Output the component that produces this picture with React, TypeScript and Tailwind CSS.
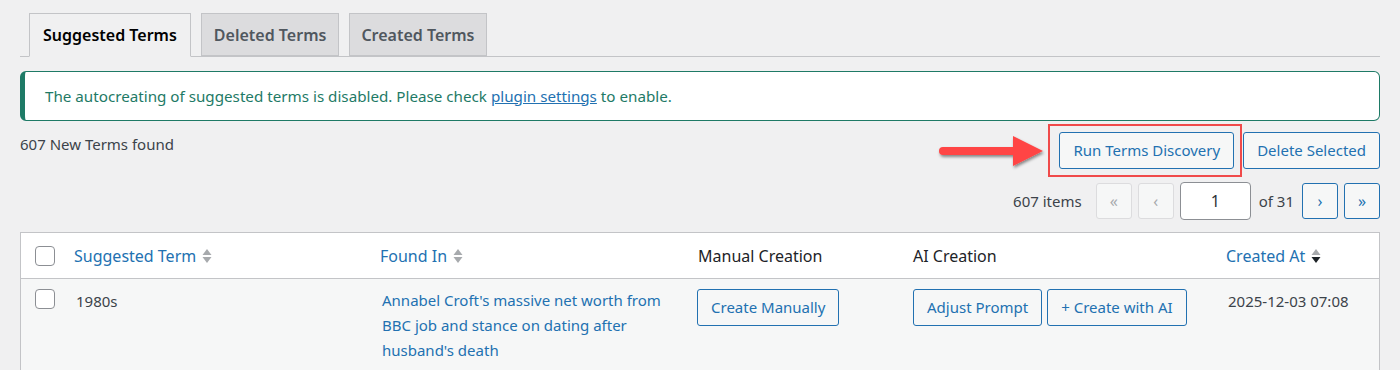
import React from "react";

const SortIcon = ({ active }: { active?: boolean }) => (
  <svg width="10" height="16" viewBox="0 0 10 16" className="ml-[6px] shrink-0">
    <path d="M5 1 L9.5 7 L0.5 7 Z" fill="#a7aaad" />
    <path d="M0.5 9 L9.5 9 L5 15 Z" fill={active ? "#1d2327" : "#a7aaad"} />
  </svg>
);

const Checkbox = () => (
  <span className="block w-5 h-5 rounded-[4px] border border-[#8c8f94] bg-white" />
);

const OutlineButton = ({ children, className = "" }: { children: React.ReactNode; className?: string }) => (
  <button
    className={
      "h-[37px] px-[13px] rounded-[3px] border border-[#2271b1] bg-[#f6f7f7] text-[#2271b1] text-[15px] whitespace-nowrap " +
      className
    }
  >
    {children}
  </button>
);

const PageButton = ({ label, disabled }: { label: string; disabled?: boolean }) => (
  <span
    className={
      disabled
        ? "flex items-center justify-center w-[36px] h-[36px] rounded-[3px] border border-[#dcdcde] bg-[#f6f7f7] text-[#a7aaad] text-[16px]"
        : "flex items-center justify-center w-[36px] h-[36px] rounded-[3px] border border-[#2271b1] bg-[#f6f7f7] text-[#2271b1] text-[16px]"
    }
  >
    {label}
  </span>
);

const Arrow = () => (
  <svg width="112" height="40" viewBox="0 0 112 40" className="absolute left-[-122px] top-[0px]">
    <defs>
      <filter id="sh" x="-20%" y="-40%" width="140%" height="180%">
        <feDropShadow dx="1" dy="2" stdDeviation="1.5" floodColor="#000" floodOpacity="0.45" />
      </filter>
    </defs>
    <g filter="url(#sh)">
      <line x1="6" y1="19" x2="80" y2="19" stroke="#ff4444" strokeWidth="8" strokeLinecap="round" />
      <path d="M76 4 L106 19 L76 34 Z" fill="#ff4444" />
    </g>
  </svg>
);

export default function App() {
  return (
    <div
      className="min-h-[370px] bg-[#f0f0f1] px-5 pt-[13px] text-[#3c434a] overflow-hidden"
      style={{ fontFamily: '"Noto Sans", "Open Sans", sans-serif' }}
    >
      {/* tabs */}
      <div className="flex items-end border-b border-[#c3c4c7] pl-[9px] gap-[10px]">
        <span className="h-[44px] -mb-px px-[13px] flex items-center border border-[#c3c4c7] border-b-[#f0f0f1] bg-[#f0f0f1] text-[#000] text-[16px] font-semibold">
          Suggested Terms
        </span>
        <span className="h-[43px] px-[12px] flex items-center border border-[#c3c4c7] bg-[#dcdcde] text-[#50575e] text-[16px] font-semibold">
          Deleted Terms
        </span>
        <span className="h-[43px] px-[11px] flex items-center border border-[#c3c4c7] bg-[#dcdcde] text-[#50575e] text-[16px] font-semibold">
          Created Terms
        </span>
      </div>

      {/* notice */}
      <div className="mt-[14px] h-[50px] flex items-center rounded-[6px] border border-[#1e7a66] border-l-[5px] bg-white pl-[20px] text-[15.2px] text-[#1e7a66]">
        The autocreating of suggested terms is disabled. Please check&nbsp;
        <a className="text-[#2271b1] underline">plugin settings</a>&nbsp;to enable.
      </div>

      {/* actions */}
      <div className="flex justify-between items-start mt-[11px]">
        <div className="text-[15px] text-[#3c434a] mt-[1px]">607 New Terms found</div>
        <div className="flex items-center gap-[9px]">
          <div className="relative">
            <Arrow />
            <span className="absolute -left-[11px] -top-[8px] -right-[8px] -bottom-[8px] border-2 border-[#f04a4a]" />
            <OutlineButton>Run Terms Discovery</OutlineButton>
          </div>
          <OutlineButton>Delete Selected</OutlineButton>
        </div>
      </div>

      {/* pagination */}
      <div className="flex justify-end items-center mt-[13px] text-[15px] text-[#3c434a]">
        <span className="mr-[14px]">607 items</span>
        <div className="flex items-center gap-[6px]">
          <PageButton label="«" disabled />
          <PageButton label="‹" disabled />
          <span className="flex items-center justify-center w-[71px] h-[38px] rounded-[4px] border border-[#8c8f94] bg-white text-[16px] text-[#2c3338]">
            1
          </span>
          <span className="mx-[2px]">of 31</span>
          <PageButton label="›" />
          <PageButton label="»" />
        </div>
      </div>

      {/* table */}
      <div className="mt-[12px] border border-[#c3c4c7] bg-white">
        <div className="grid grid-cols-[43px_306px_318px_215px_313px_1fr] h-[46px] items-center border-b border-[#c3c4c7] text-[16px]">
          <div className="pl-[14px]">
            <Checkbox />
          </div>
          <div className="pl-[10px] flex items-center text-[#2271b1]">
            Suggested Term
            <SortIcon />
          </div>
          <div className="pl-[10px] flex items-center text-[#2271b1]">
            Found In
            <SortIcon />
          </div>
          <div className="pl-[10px] text-[#1d2327]">Manual Creation</div>
          <div className="pl-[10px] text-[#1d2327]">AI Creation</div>
          <div className="pl-[10px] flex items-center text-[#2271b1]">
            Created At
            <SortIcon active />
          </div>
        </div>
        <div className="grid grid-cols-[43px_306px_318px_215px_313px_1fr] bg-[#f6f7f7] pt-[10px] pb-[10px] text-[15px]">
          <div className="pl-[14px]">
            <Checkbox />
          </div>
          <div className="pl-[12px] pt-[1px] text-[#3c434a]">1980s</div>
          <div className="pl-[12px] text-[#2271b1] leading-[25px] -mt-[1px] pr-[20px]">
            Annabel Croft's massive net worth from BBC job and stance on dating after husband's death
          </div>
          <div className="pl-[9px]">
            <OutlineButton>Create Manually</OutlineButton>
          </div>
          <div className="pl-[10px] flex gap-[5px]">
            <OutlineButton>Adjust Prompt</OutlineButton>
            <OutlineButton>+ Create with AI</OutlineButton>
          </div>
          <div className="pl-[12px] pt-[1px] text-[#3c434a]">2025-12-03 07:08</div>
        </div>
      </div>
    </div>
  );
}
